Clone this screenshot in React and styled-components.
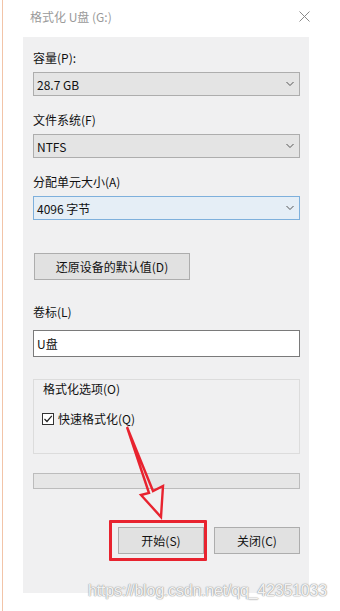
import React from 'react';
import styled, { createGlobalStyle } from 'styled-components';

const GlobalStyle = createGlobalStyle`
  html, body { margin: 0; padding: 0; background: #fff; }
  body {
    font-family: "Noto Sans CJK SC", "Liberation Sans", sans-serif;
    font-size: 12px;
    color: #111;
  }
`;

const Page = styled.div`
  position: relative;
  width: 340px;
  height: 611px;
  overflow: hidden;
  border-left: 1px solid #f2c4a8;
  margin-left: 2px;
  box-sizing: border-box;
`;

const TitleBar = styled.div`
  height: 37px;
  display: flex;
  align-items: center;
  justify-content: space-between;
  padding: 0 32px 4px 27px;
  box-sizing: border-box;
  color: #9a9a9a;
  font-size: 12px;
`;

const Panel = styled.div`
  margin-left: 20px;
  width: 286px;
  height: 556px;
  background: #f0f0f1;
  box-sizing: border-box;
  padding: 13px 9px 0 10px;
  display: flex;
  flex-direction: column;
  position: relative;
`;

const Label = styled.div`
  height: 16px;
  line-height: 16px;
  margin-bottom: ${p => p.$gap ?? 6}px;
  margin-top: ${p => p.$top ?? 0}px;
`;

const Select = styled.div`
  height: 24px;
  box-sizing: border-box;
  border: 1px solid ${p => (p.$focus ? '#7eb0dc' : '#adadad')};
  background: ${p => (p.$focus ? '#e5eef6' : '#e4e4e4')};
  display: flex;
  align-items: center;
  justify-content: space-between;
  padding: 0 4px 0 3px;
  margin-bottom: ${p => (p.$last ? 0 : 16)}px;
  color: #111;
`;

const Button = styled.div`
  width: ${p => p.$w}px;
  height: 27px;
  box-sizing: border-box;
  border: 1px solid #adadad;
  background: #e1e1e1;
  display: flex;
  align-items: center;
  justify-content: center;
  margin-top: ${p => p.$top ?? 0}px;
  margin-left: ${p => p.$left ?? 0}px;
  position: relative;
`;

const TextBox = styled.div`
  height: 27px;
  box-sizing: border-box;
  border: 1px solid #7a7a7a;
  background: #fff;
  display: flex;
  align-items: center;
  padding-left: 3px;
`;

const GroupBox = styled.div`
  margin-top: 22px;
  height: 75px;
  box-sizing: border-box;
  border: 1px solid #dcdcdc;
  padding: 0 8px;
`;

const Legend = styled.div`
  display: inline-block;
  background: #f0f0f1;
  padding: 0 1px;
  margin-top: -9px;
  height: 16px;
  line-height: 16px;
`;

const CheckRow = styled.div`
  display: flex;
  align-items: center;
  gap: 4px;
  margin-top: 13px;
`;

const CheckBox = styled.div`
  width: 12px;
  height: 12px;
  box-sizing: border-box;
  border: 1px solid #333;
  background: #fff;
  display: flex;
  align-items: center;
  justify-content: center;
`;

const Progress = styled.div`
  margin-top: 19px;
  height: 16px;
  box-sizing: border-box;
  border: 1px solid #bcbcbc;
  background: #e6e6e6;
`;

const ButtonRow = styled.div`
  display: flex;
  justify-content: flex-end;
  gap: 10px;
  margin-top: 38px;
`;

const Highlight = styled.div`
  position: absolute;
  left: -10px;
  top: -8px;
  width: 98px;
  height: 41px;
  box-sizing: border-box;
  border: 3px solid #e8232f;
  border-radius: 1px;
  pointer-events: none;
`;

const Arrow = styled.svg`
  position: absolute;
  left: 0;
  top: 0;
  pointer-events: none;
`;

const Watermark = styled.div`
  position: absolute;
  left: 85px;
  top: 582px;
  font-family: "Liberation Sans", Arial, sans-serif;
  font-size: 16px;
  letter-spacing: -0.2px;
  color: rgba(255, 255, 255, 0.9);
  text-shadow: 0 0 1px #9a9a9a, 0 0 1px #9a9a9a, 0 0 2px #c4c4c4;
  white-space: nowrap;
`;

const Chevron = () => (
  <svg width="10" height="6" viewBox="0 0 10 6">
    <path d="M1.5 1 L5 4.5 L8.5 1" fill="none" stroke="#555" strokeWidth="1" />
  </svg>
);

const CloseIcon = () => (
  <svg width="11" height="11" viewBox="0 0 11 11">
    <path d="M0.5 0.5 L10.5 10.5 M10.5 0.5 L0.5 10.5" stroke="#8a8a8a" strokeWidth="1" />
  </svg>
);

const Check = () => (
  <svg width="10" height="10" viewBox="0 0 10 10">
    <path d="M1.5 5 L4 7.5 L8.8 1.8" fill="none" stroke="#222" strokeWidth="1.2" />
  </svg>
);

const selects = [
  { label: '容量(P):', value: '28.7 GB' },
  { label: '文件系统(F)', value: 'NTFS' },
  { label: '分配单元大小(A)', value: '4096 字节', focus: true },
];

export default function App() {
  return (
    <>
      <GlobalStyle />
      <Page>
        <TitleBar>
          <span>格式化 U盘 (G:)</span>
          <CloseIcon />
        </TitleBar>
        <Panel>
          {selects.map((s, i) => (
            <React.Fragment key={s.label}>
              <Label>{s.label}</Label>
              <Select $focus={s.focus} $last={i === selects.length - 1}>
                <span>{s.value}</span>
                <Chevron />
              </Select>
            </React.Fragment>
          ))}
          <Button $w={156} $top={33} $left={1}>还原设备的默认值(D)</Button>
          <Label $top={24} $gap={10}>卷标(L)</Label>
          <TextBox>U盘</TextBox>
          <GroupBox>
            <Legend>格式化选项(O)</Legend>
            <CheckRow>
              <CheckBox><Check /></CheckBox>
              <span>快速格式化(Q)</span>
            </CheckRow>
          </GroupBox>
          <Progress />
          <ButtonRow>
            <Button $w={86}>
              开始(S)
              <Highlight />
            </Button>
            <Button $w={86}>关闭(C)</Button>
          </ButtonRow>
        </Panel>
        <Arrow width="340" height="611" viewBox="0 0 340 611">
          <path
            d="M124 427 L150 491 L160 486 L158 517 L138 495 L146 493 Z"
            fill="none"
            stroke="#e8232f"
            strokeWidth="2.4"
            strokeLinejoin="miter"
          />
        </Arrow>
        <Watermark>https://blog.csdn.net/qq_42351033</Watermark>
      </Page>
    </>
  );
}
